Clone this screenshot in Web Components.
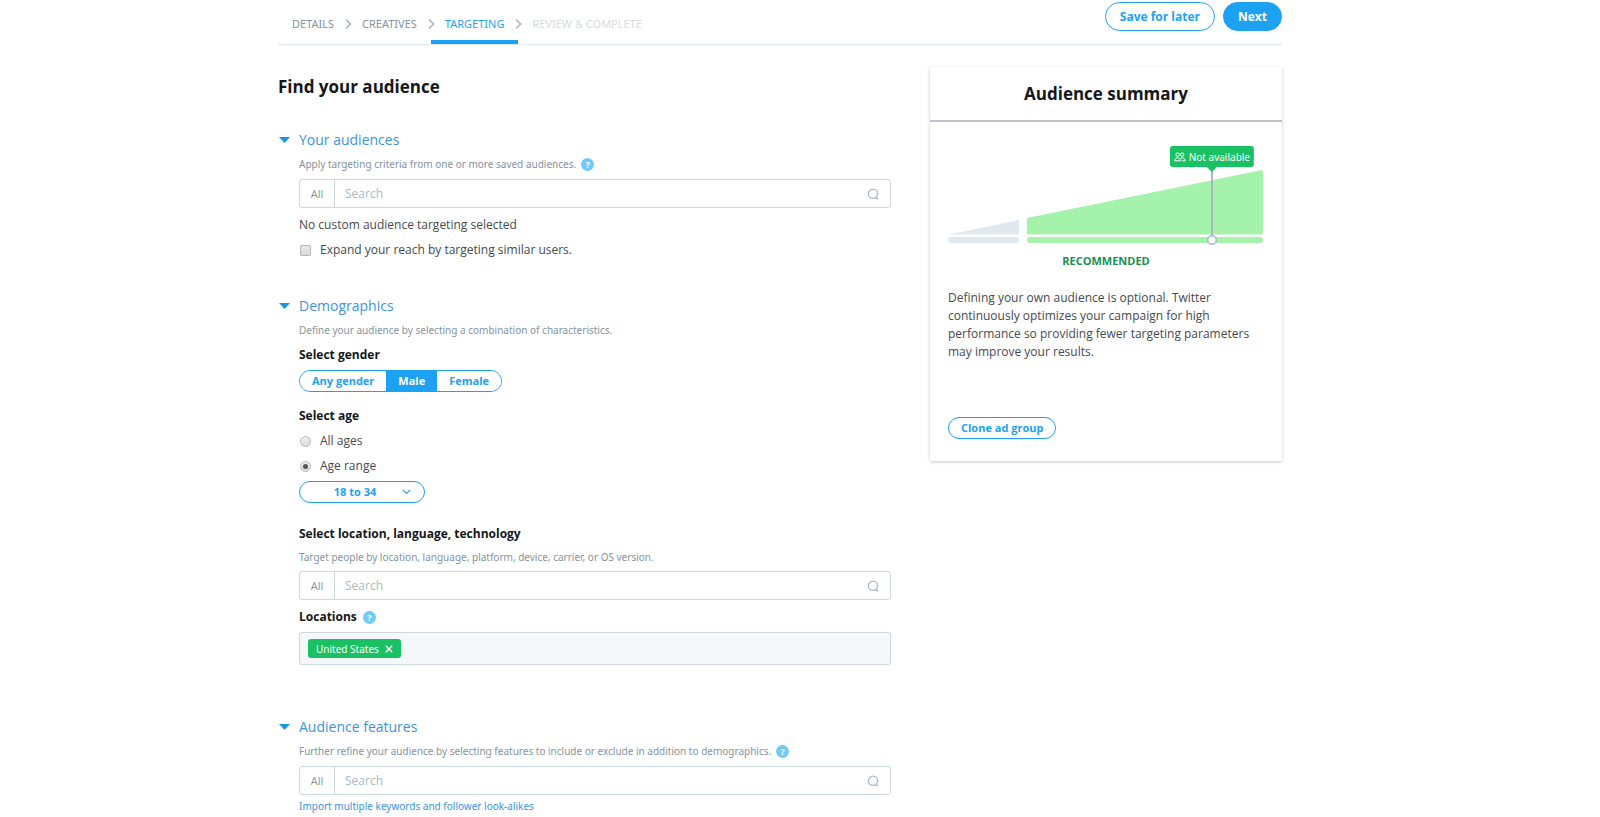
<!DOCTYPE html>
<html lang="en">
<head>
<meta charset="utf-8">
<meta name="viewport" content="width=device-width, initial-scale=1">
<title>Targeting</title>
<style>
  :root {
    --blue: #1da1f2;
    --link: #3b94d9;
    --ink: #14171a;
    --text: #46494c;
    --muted: #8493a0;
    --line: #ccd6dd;
    --pale: #e1e8ed;
    --green: #19c163;
    --font: "Open Sans", "Noto Sans", sans-serif;
    --small: 10px/16px "Noto Sans", "Open Sans", sans-serif;
  }

  body {
    margin: 0;
    background: #fff;
    color: var(--text);
    font: 12px/20px var(--font);
  }
</style>
</head>
<body>
<campaign-page>
  <step-bar slot="header">
    <pill-button size="large">Save for later</pill-button>
    <pill-button size="large" primary>Next</pill-button>
  </step-bar>

  <target-section heading="Your audiences" hint="Apply targeting criteria from one or more saved audiences." help>
    <search-field></search-field>
    <reach-option></reach-option>
  </target-section>

  <target-section heading="Demographics" hint="Define your audience by selecting a combination of characteristics.">
    <gender-picker></gender-picker>
    <age-picker></age-picker>
    <location-picker></location-picker>
  </target-section>

  <target-section class="last" heading="Audience features" hint="Further refine your audience by selecting features to include or exclude in addition to demographics." help>
    <search-field></search-field>
    <import-link></import-link>
  </target-section>

  <audience-summary slot="aside">
    <reach-chart></reach-chart>
    <p>Defining your own audience is optional. Twitter continuously optimizes your campaign for high performance so providing fewer targeting parameters may improve your results.</p>
    <pill-button slot="action">Clone ad group</pill-button>
  </audience-summary>
</campaign-page>

<script>
class BaseElement extends HTMLElement {
  constructor() {
    super();
    this.attachShadow({ mode: "open" });
  }

  connectedCallback() {
    this.shadowRoot.innerHTML = `<style>${this.constructor.styles}</style>${this.template()}`;
  }
}

class CampaignPage extends BaseElement {
  static get styles() {
    return /* css */`
      :host {
        display: block;
        max-width: 1004px;
        margin: 0 auto;
        padding: 0 60px 0 20px;
      }

      .columns {
        display: grid;
        grid-template-columns: minmax(0, 1fr) minmax(0, 352px);
        gap: 39px;
        align-items: start;
        margin-top: 22px;
      }

      h1 {
        margin: 8px 0 31px;
        font-size: 17px;
        line-height: 24px;
        color: var(--ink);
      }

      @media (max-width: 800px) {
        .columns { grid-template-columns: 1fr; }
      }
    `;
  }

  template() {
    return /* html */`
      <slot name="header"></slot>
      <div class="columns">
        <main>
          <h1>Find your audience</h1>
          <slot></slot>
        </main>
        <aside><slot name="aside"></slot></aside>
      </div>`;
  }
}

class StepBar extends BaseElement {
  static get styles() {
    return /* css */`
      :host {
        display: flex;
        justify-content: space-between;
        border-bottom: 1px solid var(--pale);
      }

      nav {
        display: flex;
        height: 44px;
        padding-top: 4px;
        box-sizing: border-box;
        font: 11px/20px "Noto Sans", "Open Sans", sans-serif;
      }

      a {
        display: flex;
        align-items: center;
        padding: 0 14px;
        color: var(--muted);
        text-decoration: none;
        white-space: nowrap;
      }

      a.active {
        color: var(--blue);
        border-bottom: 4px solid var(--blue);
        border-top: 4px solid transparent;
        box-sizing: border-box;
      }

      a.disabled { color: #d3dce2; }

      svg {
        align-self: center;
        flex: none;
        margin: 0 -4px;
      }

      .actions {
        display: flex;
        align-items: flex-start;
        gap: 8px;
        padding-top: 2px;
      }
    `;
  }

  template() {
    const chevron = /* html */`
      <svg width="8" height="12" viewBox="0 0 8 12" fill="none" stroke="#a3b1bc" stroke-width="1.5" aria-hidden="true"><path d="M2 1.5 6.5 6 2 10.5"/></svg>`;
    return /* html */`
      <nav aria-label="Steps">
        <a href="#details">DETAILS</a>${chevron}
        <a href="#creatives">CREATIVES</a>${chevron}
        <a href="#targeting" class="active" aria-current="step">TARGETING</a>${chevron}
        <a href="#review" class="disabled">REVIEW &amp; COMPLETE</a>
      </nav>
      <div class="actions"><slot></slot></div>`;
  }
}

class PillButton extends BaseElement {
  static get styles() {
    return /* css */`
      :host { display: inline-block; }

      button {
        height: 22px;
        padding: 0 12px;
        border: 1px solid var(--blue);
        border-radius: 15px;
        background: #fff;
        color: var(--blue);
        font: bold 11px/20px var(--font);
        white-space: nowrap;
        cursor: pointer;
      }

      :host([size="large"]) button {
        height: 29px;
        padding: 0 14px;
        font-size: 12px;
      }

      :host([primary]) button {
        background: var(--blue);
        color: #fff;
      }
    `;
  }

  template() {
    return /* html */`<button type="button"><slot></slot></button>`;
  }
}

class HelpDot extends BaseElement {
  static get styles() {
    return /* css */`
      :host { display: inline-flex; }

      button {
        width: 13px;
        height: 13px;
        padding: 0;
        border: 0;
        border-radius: 50%;
        background: #71c9f8;
        color: #fff;
        font: bold 9px/13px var(--font);
      }
    `;
  }

  template() {
    return /* html */`<button type="button">?</button>`;
  }
}

class TargetSection extends BaseElement {
  static get styles() {
    return /* css */`
      :host {
        display: block;
        padding-left: 21px;
        margin-bottom: 36px;
      }

      :host(.last) { margin: 52px 0 0; }

      h2 {
        margin: 0 0 6px -21px;
        font-size: 14px;
        font-weight: normal;
        line-height: 20px;
      }

      h2 button {
        display: flex;
        align-items: center;
        gap: 9px;
        padding: 0 0 0 1px;
        border: 0;
        background: none;
        color: var(--link);
        font: inherit;
        cursor: pointer;
      }

      .hint {
        display: flex;
        align-items: center;
        gap: 5px;
        margin: 0 0 7px;
        font: var(--small);
        color: var(--muted);
      }
    `;
  }

  template() {
    return /* html */`
      <section>
        <h2>
          <button type="button" aria-expanded="true">
            <svg width="11" height="6" viewBox="0 0 11 6" fill="#1b95e0" aria-hidden="true"><path d="M0 0h11L5.5 6z"/></svg>
            ${this.getAttribute("heading")}
          </button>
        </h2>
        <p class="hint">${this.getAttribute("hint")}${this.hasAttribute("help") ? "<help-dot></help-dot>" : ""}</p>
        <slot></slot>
      </section>`;
  }
}

class SearchField extends BaseElement {
  static get styles() {
    return /* css */`
      :host { display: block; }

      .field {
        display: flex;
        align-items: center;
        height: 29px;
        box-sizing: border-box;
        border: 1px solid var(--line);
        border-radius: 3px;
      }

      button {
        align-self: stretch;
        width: 35px;
        padding: 0;
        border: 0;
        border-right: 1px solid var(--line);
        background: none;
        color: var(--muted);
        font: inherit;
        font-size: 11px;
      }

      input {
        flex: 1;
        min-width: 0;
        padding: 0 10px;
        border: 0;
        outline: 0;
        background: none;
        color: var(--text);
        font: inherit;
      }

      input::placeholder { color: #aab8c2; }

      svg { margin-right: 11px; }
    `;
  }

  template() {
    return /* html */`
      <div class="field">
        <button type="button">All</button>
        <input type="text" placeholder="Search" aria-label="Search">
        <svg width="12" height="12" viewBox="0 0 12 12" fill="none" stroke="#aab8c2" stroke-width="1.3" aria-hidden="true"><circle cx="6" cy="5.8" r="4.6"/><path d="m8.5 9 2.5 2.3"/></svg>
      </div>`;
  }
}

class ReachOption extends BaseElement {
  static get styles() {
    return /* css */`
      :host { display: block; }

      p { margin: 7px 0 5px; }

      label {
        display: flex;
        align-items: center;
        gap: 9px;
      }

      input {
        appearance: none;
        box-sizing: border-box;
        width: 11px;
        height: 11px;
        margin: 0 0 0 1px;
        border: 1px solid #b4b4b4;
        border-radius: 2px;
        background: linear-gradient(#e9e9e9, #d8d8d8);
      }

      input:checked { background: var(--blue); }
    `;
  }

  template() {
    return /* html */`
      <p>No custom audience targeting selected</p>
      <label><input type="checkbox">Expand your reach by targeting similar users.</label>`;
  }
}

class GenderPicker extends BaseElement {
  static get styles() {
    return /* css */`
      :host { display: block; }

      h3 {
        margin: 0 0 5px;
        font-size: 12px;
        line-height: 20px;
        color: var(--ink);
      }

      .group {
        display: inline-flex;
        height: 22px;
        box-sizing: border-box;
        border: 1px solid var(--blue);
        border-radius: 11px;
        overflow: hidden;
        vertical-align: top;
      }

      button {
        padding: 0 12px;
        border: 0;
        background: #fff;
        color: var(--blue);
        font: bold 11px/20px var(--font);
      }

      button[aria-pressed="true"] {
        background: var(--blue);
        color: #fff;
      }
    `;
  }

  connectedCallback() {
    super.connectedCallback();
    const buttons = this.shadowRoot.querySelectorAll("button");
    buttons.forEach((button) => button.addEventListener("click", () => {
      buttons.forEach((other) => other.setAttribute("aria-pressed", other === button));
    }));
  }

  template() {
    return /* html */`
      <h3 id="gender">Select gender</h3>
      <div class="group" role="group" aria-labelledby="gender">
        <button type="button" aria-pressed="false">Any gender</button>
        <button type="button" aria-pressed="true">Male</button>
        <button type="button" aria-pressed="false">Female</button>
      </div>`;
  }
}

class AgePicker extends BaseElement {
  static get styles() {
    return /* css */`
      :host { display: block; margin-top: 14px; }

      h3 {
        margin: 0;
        font-size: 12px;
        line-height: 20px;
        color: var(--ink);
      }

      label {
        display: flex;
        align-items: center;
        gap: 9px;
        margin: 5px 0;
      }

      input {
        appearance: none;
        display: grid;
        place-items: center;
        box-sizing: border-box;
        width: 11px;
        height: 11px;
        margin: 0 0 0 1px;
        border: 1px solid #b9b9b9;
        border-radius: 50%;
        background: linear-gradient(#ededed, #dcdcdc);
      }

      input:checked::before {
        content: "";
        width: 5px;
        height: 5px;
        border-radius: 50%;
        background: #555;
      }

      .select {
        display: inline-grid;
        align-items: center;
        width: 126px;
        vertical-align: top;
      }

      select, svg { grid-area: 1 / 1; }

      select {
        appearance: none;
        width: 100%;
        height: 22px;
        padding: 0 26px 0 12px;
        border: 1px solid var(--blue);
        border-radius: 11px;
        background: #fff;
        color: var(--blue);
        font: bold 11px/20px var(--font);
        text-align-last: center;
      }

      svg {
        justify-self: end;
        margin-right: 14px;
        pointer-events: none;
      }
    `;
  }

  template() {
    return /* html */`
      <h3>Select age</h3>
      <label><input type="radio" name="age">All ages</label>
      <label><input type="radio" name="age" checked>Age range</label>
      <span class="select">
        <select aria-label="Age range">
          <option>18 to 34</option>
          <option>21 to 49</option>
        </select>
        <svg width="9" height="6" viewBox="0 0 9 6" fill="none" stroke="#1da1f2" stroke-width="1.2" aria-hidden="true"><path d="m.8.8 3.7 3.7L8.2.8"/></svg>
      </span>`;
  }
}

class LocationPicker extends BaseElement {
  static get styles() {
    return /* css */`
      :host { display: block; margin-top: 21px; }

      h3 {
        display: flex;
        align-items: center;
        gap: 6px;
        margin: 0 0 5px;
        font-size: 12px;
        line-height: 20px;
        color: var(--ink);
      }

      p {
        margin: 0 0 6px;
        font: var(--small);
        color: var(--muted);
      }

      search-field { margin-bottom: 7px; }

      .tags {
        display: flex;
        flex-wrap: wrap;
        gap: 4px;
        padding: 6px 8px;
        border: 1px solid var(--line);
        border-radius: 3px;
        background: #f5f8fa;
      }

      .tag {
        display: flex;
        align-items: center;
        gap: 6px;
        height: 19px;
        padding: 0 8px;
        border-radius: 3px;
        background: var(--green);
        color: #fff;
        font: var(--small);
      }

      .tag button {
        display: flex;
        padding: 0;
        border: 0;
        background: none;
        color: inherit;
      }
    `;
  }

  template() {
    return /* html */`
      <h3>Select location, language, technology</h3>
      <p>Target people by location, language, platform, device, carrier, or OS version.</p>
      <search-field></search-field>
      <h3>Locations <help-dot></help-dot></h3>
      <div class="tags">
        <span class="tag">United States
          <button type="button" aria-label="Remove">
            <svg width="8" height="8" viewBox="0 0 8 8" stroke="currentColor" stroke-width="1.5" aria-hidden="true"><path d="m.8.8 6.4 6.4M7.2.8.8 7.2"/></svg>
          </button>
        </span>
      </div>`;
  }
}

class ImportLink extends BaseElement {
  static get styles() {
    return /* css */`
      :host {
        display: block;
        margin-top: 3px;
        font: var(--small);
      }

      a {
        color: var(--link);
        text-decoration: none;
      }
    `;
  }

  template() {
    return /* html */`<a href="#import">Import multiple keywords and follower look-alikes</a>`;
  }
}

class AudienceSummary extends BaseElement {
  static get styles() {
    return /* css */`
      :host {
        display: block;
        background: #fff;
        box-shadow: 0 1px 3px rgba(101, 119, 134, 0.4);
      }

      h2 {
        margin: 0;
        padding: 15px 0 14px;
        border-bottom: 2px solid #b8c5ce;
        font-size: 17px;
        line-height: 24px;
        text-align: center;
        color: var(--ink);
      }

      .body { padding: 24px 18px 22px; }

      ::slotted(p) {
        margin: 18px 0 56px;
        line-height: 18px;
      }

      ::slotted(pill-button) { vertical-align: top; }
    `;
  }

  template() {
    return /* html */`
      <h2>Audience summary</h2>
      <div class="body">
        <slot></slot>
        <slot name="action"></slot>
      </div>`;
  }
}

class ReachChart extends BaseElement {
  static get styles() {
    return /* css */`
      :host { display: block; }

      .chart { position: relative; }

      .chart svg { display: block; width: 100%; }

      /* flag sits over the marker line */
      .flag {
        position: absolute;
        top: 0;
        left: 83.5%;
        transform: translateX(-50%);
        display: flex;
        align-items: center;
        gap: 3px;
        height: 21px;
        padding: 0 4px;
        border-radius: 3px;
        background: var(--green);
        color: #fff;
        font: var(--small);
        white-space: nowrap;
      }

      .chart .flag svg { width: 12px; }

      .flag::after {
        content: "";
        position: absolute;
        top: 100%;
        left: 50%;
        margin-left: -5px;
        border: 5px solid transparent;
        border-top-color: var(--green);
        border-bottom: 0;
      }

      .label {
        display: block;
        margin-top: 6px;
        color: #17914f;
        font-size: 11px;
        line-height: 20px;
        text-align: center;
      }
    `;
  }

  template() {
    return /* html */`
      <div class="chart">
        <svg viewBox="0 0 316 99" aria-hidden="true">
          <path fill="#e1e8ed" d="M1 88.5 71 74v14.5z"/>
          <rect fill="#e1e8ed" y="91" width="71" height="6" rx="3"/>
          <path fill="#a5f2aa" d="M79 72 313 24.3Q315 24 315 26v60.5q0 2-2 2H79z"/>
          <rect fill="#a5f2aa" x="79" y="91" width="236" height="6" rx="3"/>
          <path stroke="#aab8c2" stroke-width="2" d="M264 25v65"/>
          <circle cx="264" cy="94" r="4.3" fill="#fff" stroke="#aab8c2" stroke-width="1.5"/>
        </svg>
        <span class="flag">
          <svg width="12" height="10" viewBox="0 0 12 10" fill="none" stroke="#fff" aria-hidden="true">
            <circle cx="3.7" cy="2.6" r="1.7"/>
            <circle cx="8.3" cy="2.6" r="1.7"/>
            <path d="M3.7 5.8C1.8 5.8.9 7 .6 8.8h6.2C6.5 7 5.6 5.8 3.7 5.8zM6.600 6.400c.5-.4 1-.6 1.700-.6 1.900 0 2.800 1.200 3.100 3H8.300"/>
          </svg>
          Not available
        </span>
      </div>
      <strong class="label">RECOMMENDED</strong>`;
  }
}

customElements.define("help-dot", HelpDot);
customElements.define("pill-button", PillButton);
customElements.define("search-field", SearchField);
customElements.define("reach-option", ReachOption);
customElements.define("gender-picker", GenderPicker);
customElements.define("age-picker", AgePicker);
customElements.define("location-picker", LocationPicker);
customElements.define("import-link", ImportLink);
customElements.define("reach-chart", ReachChart);
customElements.define("audience-summary", AudienceSummary);
customElements.define("target-section", TargetSection);
customElements.define("step-bar", StepBar);
customElements.define("campaign-page", CampaignPage);
</script>
</body>
</html>
